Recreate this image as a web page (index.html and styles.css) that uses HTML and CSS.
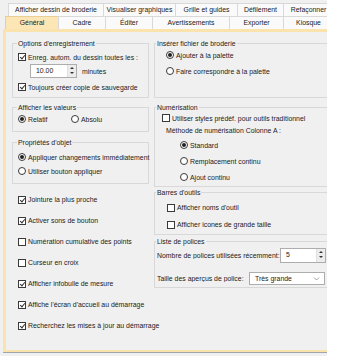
FILE: index.html
```html
<!DOCTYPE html>
<html>
<head>
<meta charset="utf-8">
<title>Options</title>
<link rel="stylesheet" href="styles.css">
</head>
<body>
<div id="window">
<div id="dialog">
	<div class="tabrow back">
		<span class="tab" style="width:95px">Afficher dessin de broderie</span>
		<span class="tab" style="width:72px">Visualiser graphiques</span>
		<span class="tab" style="width:62px">Grille et guides</span>
		<span class="tab" style="width:46px">Défilement</span>
		<span class="tab" style="width:50px">Refaçonner</span>
	</div>
	<div class="tabrow front">
		<span class="tab current" style="width:53px">Général</span>
		<span class="tab" style="width:47px">Cadre</span>
		<span class="tab" style="width:47px">Éditer</span>
		<span class="tab" style="width:77px">Avertissements</span>
		<span class="tab" style="width:54px">Exporter</span>
		<span class="tab" style="width:50px">Kiosque</span>
	</div>

	<div id="panel">
		<div class="col left">
			<div class="group g-save">
				<div class="title">Options d'enregistrement</div>
				<div class="row"><span class="check on"></span>Enreg. autom. du dessin toutes les :</div>
				<div class="row spinrow">
					<span class="spin"><span class="val">10.00</span><span class="arrows"><span class="up"></span><span class="down"></span></span></span>
					<span class="unit">minutes</span>
				</div>
				<div class="row"><span class="check on"></span>Toujours créer copie de sauvegarde</div>
			</div>

			<div class="group g-values">
				<div class="title">Afficher les valeurs</div>
				<div class="row">
					<span class="opt"><span class="radio on"></span>Relatif</span>
					<span class="opt"><span class="radio"></span>Absolu</span>
				</div>
			</div>

			<div class="group g-props">
				<div class="title">Propriétés d'objet</div>
				<div class="row"><span class="radio on"></span>Appliquer changements immédiatement</div>
				<div class="row"><span class="radio"></span>Utiliser bouton appliquer</div>
			</div>

			<div class="loose">
				<div class="row"><span class="check on"></span>Jointure la plus proche</div>
				<div class="row"><span class="check on"></span>Activer sons de bouton</div>
				<div class="row"><span class="check"></span>Numération cumulative des points</div>
				<div class="row"><span class="check"></span>Curseur en croix</div>
				<div class="row"><span class="check on"></span>Afficher infobulle de mesure</div>
				<div class="row"><span class="check on"></span>Affiche l'écran d'accueil au démarrage</div>
				<div class="row"><span class="check on"></span>Recherchez les mises à jour au démarrage</div>
			</div>
		</div>

		<div class="col right">
			<div class="group g-insert">
				<div class="title">Insérer fichier de broderie</div>
				<div class="row"><span class="radio on"></span>Ajouter à la palette</div>
				<div class="row"><span class="radio"></span>Faire correspondre à la palette</div>
			</div>

			<div class="group g-digit">
				<div class="title">Numérisation</div>
				<div class="row"><span class="check"></span>Utiliser styles prédéf. pour outils traditionnel</div>
				<div class="row method">Méthode de numérisation Colonne A :</div>
				<div class="row sub"><span class="radio on"></span>Standard</div>
				<div class="row sub"><span class="radio"></span>Remplacement continu</div>
				<div class="row sub"><span class="radio"></span>Ajout continu</div>
			</div>

			<div class="group g-bars">
				<div class="title">Barres d'outils</div>
				<div class="row"><span class="check"></span>Afficher noms d'outil</div>
				<div class="row"><span class="check"></span>Afficher icones de grande taille</div>
			</div>

			<div class="group g-fonts">
				<div class="title">Liste de polices</div>
				<div class="row">
					<span class="label">Nombre de polices utilisées récemment:</span>
					<span class="spin small"><span class="val">5</span><span class="arrows"><span class="up"></span><span class="down"></span></span></span>
				</div>
				<div class="row">
					<span class="label short">Taille des aperçus de police:</span>
					<span class="select"><span class="val">Très grande</span><svg width="7" height="5" viewBox="0 0 7 5"><path d="M1 1.5 L3.5 4 L6 1.5" fill="none" stroke="#888" stroke-width="0.8"/></svg></span>
				</div>
			</div>
		</div>
	</div>
</div>
</div>
</body>
</html>
```

FILE: styles.css
```css
html, body {
	margin: 0;
	background: white;
}
#window {
	width: 327px;
	height: 356px;
	overflow: hidden;
	font-family: "Liberation Sans", Arial, sans-serif;
	font-size: 6.9px;
	color: #222;
}
#dialog {
	width: 360px;
	height: 356px;
	background: #f0f0f0;
	padding-top: 3px;
	box-sizing: border-box;
}
.tabrow {
	display: flex;
	height: 13px;
}
.tabrow.back {
	padding-left: 8px;
}
.tabrow.front {
	padding-left: 5px;
}
.tab {
	box-sizing: border-box;
	flex: none;
	height: 13px;
	line-height: 12px;
	text-align: center;
	white-space: nowrap;
	overflow: hidden;
	background: #fafafa;
	border-top: 1px solid #d9d9d9;
	border-left: 1px solid #d9d9d9;
}
.tab.current {
	background: #fce6b6;
	border-color: #e9cf95;
}
#panel {
	display: flex;
	height: 323px;
	box-sizing: border-box;
	border-top: 3px solid #fbe3ad;
	border-left: 3px solid #fbe3ad;
	border-bottom: 2px solid #fbe3ad;
	box-shadow: 0 1px 0 #9ea5ad;
	background: #f0f0f0;
	padding: 11px 0 0 6px;
	margin-left: 3px;
}
.col.left {
	flex: none;
	width: 137px;
}
.col.right {
	flex: none;
	width: 190px;
	margin-left: 5px;
}

/* group boxes: title sits on the top line */
.group {
	box-sizing: border-box;
	border: 1px solid #d8d8d8;
}
.group .title {
	display: table;
	margin: -5px 0 0 4px;
	padding: 0 1px;
	line-height: 9px;
	background: #f0f0f0;
	white-space: nowrap;
}
.right .group .title {
	margin-left: 1px;
}
.row {
	display: flex;
	align-items: center;
	white-space: nowrap;
}
.check, .radio {
	flex: none;
	box-sizing: border-box;
	width: 8px;
	height: 8px;
	margin-right: 2px;
	border: 1px solid #3a3a3a;
	background: white;
	position: relative;
}
.radio {
	border-radius: 50%;
}
.radio.on::after {
	content: "";
	position: absolute;
	left: 1px;
	top: 1px;
	width: 4px;
	height: 4px;
	border-radius: 50%;
	background: #222;
}
.check.on::after {
	content: "";
	position: absolute;
	left: 2px;
	top: 0;
	width: 2px;
	height: 4px;
	border: solid #333;
	border-width: 0 1px 1px 0;
	transform: rotate(40deg);
}

/* spinner and drop-down */
.spin {
	display: flex;
	box-sizing: border-box;
	height: 14px;
	width: 47px;
	background: white;
	border: 1px solid #adadad;
}
.spin .val {
	flex: 1;
	padding-left: 5px;
	line-height: 12px;
}
.arrows {
	display: flex;
	flex-direction: column;
	width: 8px;
	border-left: 1px solid #e0e0e0;
	background: #ececec;
}
.arrows span {
	flex: 1;
	position: relative;
}
.arrows .up::after, .arrows .down::after {
	content: "";
	position: absolute;
	left: 2px;
	top: 2px;
	border-left: 2px solid transparent;
	border-right: 2px solid transparent;
}
.arrows .up::after {
	border-bottom: 2px solid #333;
}
.arrows .down::after {
	top: 1px;
	border-top: 2px solid #333;
}
.select {
	display: flex;
	align-items: center;
	justify-content: space-between;
	box-sizing: border-box;
	height: 13px;
	width: 76px;
	padding: 0 4px 0 5px;
	background: white;
	border: 1px solid #adadad;
}

/* left column */
.g-save {
	height: 55px;
}
.g-save .title {
	margin-bottom: 3px;
}
.g-save .row {
	height: 16px;
	padding-left: 5px;
}
.g-save .row:nth-child(2) {
	height: 12px;
}
.g-save .spinrow {
	padding-left: 17px;
}
.unit {
	margin-left: 5px;
}
.g-values {
	margin-top: 9px;
	height: 25px;
}
.g-values .title {
	margin-bottom: 1px;
}
.g-values .row {
	height: 12px;
	padding-left: 5px;
}
.g-values .opt {
	display: flex;
	align-items: center;
	width: 53px;
}
.g-props {
	margin-top: 10px;
	height: 42px;
}
.g-props .title {
	margin-bottom: 3px;
}
.g-props .row {
	height: 14px;
	padding-left: 5px;
}
.loose {
	padding: 5px 0 0 6px;
}
.loose .row {
	height: 21px;
}

/* right column */
.g-insert {
	height: 55px;
}
.g-insert .row {
	height: 14px;
	padding-left: 11px;
}
.g-insert .row + .row {
	height: 18px;
}
.g-digit {
	margin-top: 9px;
	height: 80px;
}
.g-digit .row {
	height: 12px;
	padding-left: 7px;
}
.g-digit .method {
	padding-left: 11px;
}
.g-digit .row.sub {
	height: 16px;
	padding-left: 25px;
}
.g-digit .method + .sub {
	margin-top: 1px;
}
.g-bars {
	margin-top: 5px;
	height: 43px;
}
.g-bars .title {
	margin-bottom: 2px;
}
.g-bars .row {
	height: 17px;
	padding-left: 12px;
}
.g-fonts {
	margin-top: 6px;
	height: 47px;
}
.g-fonts .title {
	margin-bottom: 1px;
}
.g-fonts .row {
	height: 16px;
	padding-left: 2px;
}
.g-fonts .row + .row {
	margin-top: 7px;
}
.g-fonts .label {
	width: 123px;
	overflow: hidden;
}
.g-fonts .label.short {
	width: 92px;
}
.spin.small {
	width: 46px;
	height: 15px;
}
```
